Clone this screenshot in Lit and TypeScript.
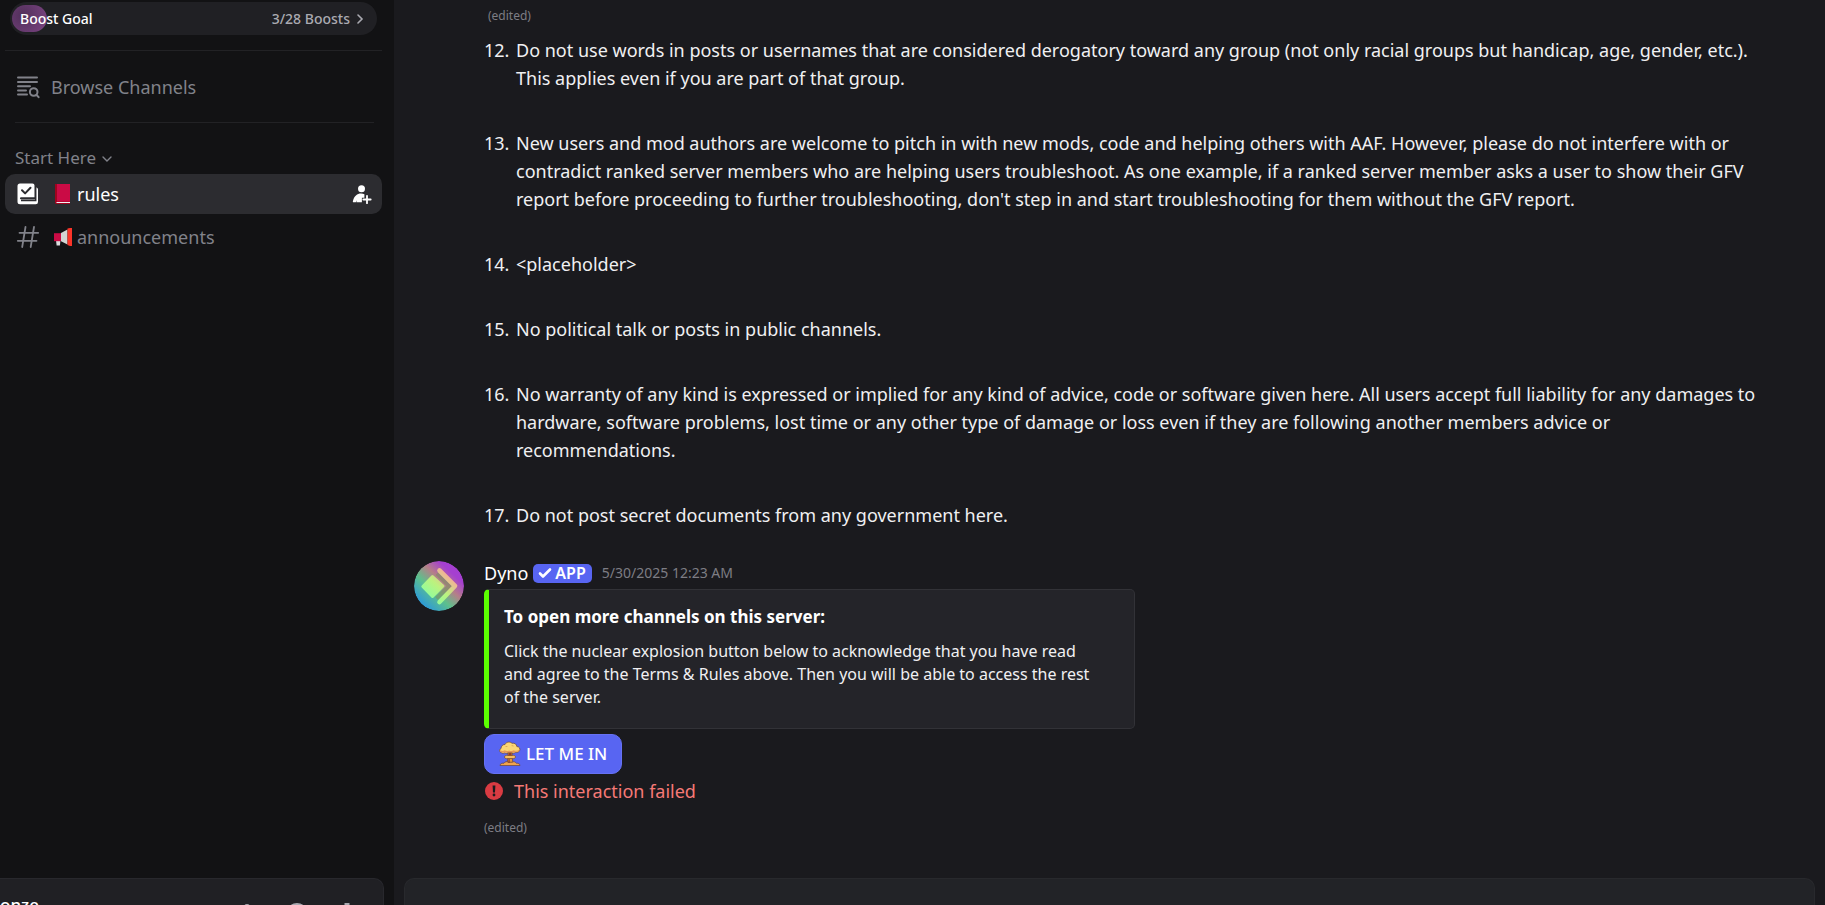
import { LitElement, html, css, svg } from "lit";
import { customElement, property } from "lit/decorators.js";

interface Rule {
  n: number;
  text: string;
}

const RULES: Rule[] = [
  { n: 12, text: "Do not use words in posts or usernames that are considered derogatory toward any group (not only racial groups but handicap, age, gender, etc.). This applies even if you are part of that group." },
  { n: 13, text: "New users and mod authors are welcome to pitch in with new mods, code and helping others with AAF. However, please do not interfere with or contradict ranked server members who are helping users troubleshoot. As one example, if a ranked server member asks a user to show their GFV report before proceeding to further troubleshooting, don't step in and start troubleshooting for them without the GFV report." },
  { n: 14, text: "<placeholder>" },
  { n: 15, text: "No political talk or posts in public channels." },
  { n: 16, text: "No warranty of any kind is expressed or implied for any kind of advice, code or software given here. All users accept full liability for any damages to hardware, software problems, lost time or any other type of damage or loss even if they are following another members advice or recommendations." },
  { n: 17, text: "Do not post secret documents from any government here." },
];

const browseIcon = svg`<svg width="24" height="24" viewBox="0 0 24 24" fill="none" stroke="currentColor" stroke-width="2" stroke-linecap="round"><path d="M2 2.5h19M2 7h19M2 11.2h12M2 15.4h8M2 19.6h9"/><circle cx="17.7" cy="17" r="3.8"/><path d="M20.6 20l2 2.2"/></svg>`;

const rulesIcon = svg`<svg width="24" height="24" viewBox="0 0 24 24" fill="none"><path fill="currentColor" fill-rule="evenodd" d="M4 1.5h12.500a2 2 0 0 1 2 2v11.800H5.200c-1.700 0-1.700 2.200 0 2.200h14.600V5.200c1 .2 2.200.9 2.200 2V20a2.300 2.300 0 0 1-2.300 2.300H4A2.500 2.500 0 0 1 1.500 19.800V4A2.500 2.500 0 0 1 4 1.500z"/><path d="M19.700 4v14.400H5" stroke="#2c2c30" stroke-width="1.500"/><path d="M6 8.300l3.100 3.100 5.400-5.600" stroke="#2c2c30" stroke-width="2" stroke-linecap="round" stroke-linejoin="round"/></svg>`;

const hashIcon = svg`<svg width="24" height="24" viewBox="0 0 24 24" fill="none" stroke="currentColor" stroke-width="1.800" stroke-linecap="round"><path d="M9.500 2L6.200 22M18 2l-3.300 20M3.500 7.800h18.700M1.800 15.800h18.700"/></svg>`;

const bookEmoji = svg`<svg width="16" height="20" viewBox="0 0 16 20"><path fill="#a0041e" d="M0 0h15v20H1.500A1.500 1.500 0 0 1 0 18.500z"/><path fill="#ca0b45" d="M2 0h13v17.500H2z"/><path fill="#f1f1f3" d="M1.500 18h13.500v1H1.500z"/></svg>`;

const megaphoneEmoji = svg`<svg width="20" height="20" viewBox="0 0 20 20"><path fill="#d9dcdd" d="M3 13h4.500l-.6 5.500H3.600z"/><path fill="#ca0b45" d="M1 6.200h7v8H1z"/><path fill="#d3d5d4" d="M8 6l6.500-3.500v15L8 14.300z"/><path fill="#fb3429" d="M14.500 1.500L17 1h2v18h-2l-2.500-1z"/></svg>`;

const addPersonIcon = svg`<svg width="20" height="20" viewBox="0 0 20 20" fill="currentColor"><circle cx="9.500" cy="4.800" r="3.500"/><path d="M1.500 18.300c-.6 0-.8-.4-.6-1C2 12.200 5.300 9.600 9 9.600c1.300 0 2.500.2 3.400.7v3.400H9.900v4.600H4.400l.6-2.100-1.200 2.100z"/><path d="M15 11.800v7.400M11.300 15.500h7.400" stroke="currentColor" stroke-width="1.800" stroke-linecap="round"/></svg>`;

const dynoLogo = svg`<svg class="avatar" width="50" height="50" viewBox="0 0 50 50" role="img" aria-label="Dyno"><defs><linearGradient id="bg" x1="0.100" y1="0.900" x2="0.850" y2="0.100"><stop offset="0" stop-color="#2493e6"/><stop offset=".38" stop-color="#5dc08c"/><stop offset=".62" stop-color="#b57f88"/><stop offset=".85" stop-color="#a53fd0"/><stop offset="1" stop-color="#a53fd0"/></linearGradient><linearGradient id="fg" gradientUnits="userSpaceOnUse" x1="12" y1="38" x2="36" y2="12"><stop offset="0" stop-color="#86ffa4"/><stop offset=".5" stop-color="#bcf27e"/><stop offset="1" stop-color="#ffa39c"/></linearGradient></defs><circle cx="25" cy="25" r="25" fill="url(#bg)"/><path d="M18.500 15.500l10.500 9.500-10.500 10.500L8.800 25.500z" fill="url(#fg)" stroke="url(#fg)" stroke-width="3" stroke-linejoin="round"/><path d="M23 12.500L35.500 25 22.500 37.500" fill="none" stroke="#7f8f62" stroke-opacity=".6" stroke-width="4"/><path d="M25.500 9.500L41 25 25.500 41" fill="none" stroke="url(#fg)" stroke-width="4.600" stroke-linecap="round" stroke-linejoin="round"/></svg>`;

const nukeEmoji = svg`<svg width="22" height="26" viewBox="0 0 22 26"><g stroke="#6b4436" stroke-width=".7" stroke-linejoin="round"><path fill="#e89a3c" d="M8.500 11h5l-.6 4 1 6.500H8.200l1-6.500z"/><path fill="#f2a34b" d="M1 24.500c0-1.600 2-2.500 4-2.300 1-1.700 3-2 4-1h4.300c1.700-1 3-.2 4 1 2-.1 3.700.8 3.700 2.300z"/><path fill="#f7bd60" d="M5.500 16c0-1.500 2-2 3.500-1.500h4c2-.5 3.500.2 3.500 1.500s-2 2-3.500 1.500H9c-1.700.5-3.500 0-3.500-1.500z"/><path fill="#fbd675" d="M2.200 11.500C.2 11-.2 8.700 2 7.600 2 5 4.200 3.300 6 3.500 7.300.8 11 .3 13 2.300c2.500-.6 4.800 1 4.800 3.200 2.700.2 3.700 2.500 2.800 4-.6 1.600-2.800 2.400-4.200 1.800-1.200 1.200-2.700 1-3.400.3-1 .8-3 .8-4 0-1 .8-2.300 1-3.200.2-1.200.8-2.700.6-3.600-.3z"/></g><path fill="#e99757" d="M1 9c1.700 1.500 3.600 1 4.700.2C7.500 10.400 9 10 10 9.400c2 1 3.800.6 4.700-.2 1.700 1 4.300.8 5.600-.6.3 1.700-2 2.700-3.700 2-1 1.300-2.600 1.300-3.700.5-1.200.8-3 .6-3.800 0-1.200.9-2.400 1-3.400.1C3 12 .9 11 1 9z"/><path fill="#8a4030" d="M9.500 11.500h3v3h-3zM9.500 18h1.200v4H9.300z"/><path fill="#c8894a" d="M6 6c1-1.200 2.200-1 3-.3M12 5c1-.9 2.500-.7 3 .3"/></svg>`;

const errorIcon = svg`<svg width="20" height="20" viewBox="0 0 20 20"><circle cx="10" cy="10" r="9" fill="#d93b42"/><path d="M8.600 4.500h2.800L11 11.500H9z" fill="#1a1a1e"/><circle cx="10" cy="14" r="1.400" fill="#1a1a1e"/></svg>`;

@customElement("channel-link")
export class ChannelLink extends LitElement {
  @property() label = "";
  @property({ type: Boolean }) selected = false;
  static styles = css`
    :host { display: block; }
    .row { display: flex; align-items: center; height: 40px; padding: 0 10px 0 11px; border-radius: 10px; color: #81828a; font-size: 18px; line-height: 24px; }
    .row.selected { background: #2c2c30; color: #fff; }
    .line { display: flex; align-items: center; gap: 13px; flex: 1; color: inherit; text-decoration: none; }
    .name { display: flex; align-items: center; gap: 4px; }
    .emoji { display: flex; width: 20px; justify-content: center; }
    svg { display: block; flex: none; }
    .invite { display: flex; padding: 0; border: 0; background: none; color: #fff; }
  `;
  render() {
    return html`<div class="row ${this.selected ? "selected" : ""}">
      <a class="line" href="#${this.label}">
        ${this.selected ? rulesIcon : hashIcon}
        <span class="name"><span class="emoji">${this.selected ? bookEmoji : megaphoneEmoji}</span><span>${this.label}</span></span>
      </a>
      ${this.selected ? html`<button class="invite" aria-label="Create invite">${addPersonIcon}</button>` : ""}
    </div>`;
  }
}

@customElement("server-sidebar")
export class ServerSidebar extends LitElement {
  static styles = css`
    :host { display: flex; flex-direction: column; width: 394px; flex: none; background: #121214; color: #81828a; }
    svg { display: block; flex: none; }
    a { color: inherit; text-decoration: none; }
    .boost { position: relative; display: flex; align-items: center; justify-content: space-between; height: 33px; margin: 2px 17px 0 10px; padding: 0 12px 0 10px; border-radius: 17px; background: #202024; font-size: 14px; font-weight: 500; line-height: 16px; }
    .fill { position: absolute; left: 2px; top: 3px; bottom: 3px; width: 35px; border-radius: 14px; background: radial-gradient(circle at 30% 40%, #51305a, #7d4484); }
    .goal { position: relative; color: #fff; }
    .count { display: flex; align-items: center; gap: 5px; color: #aaaab1; }
    hr { width: auto; height: 1px; margin: 0; border: 0; background: #222225; }
    .wide { margin: 15px 12px 0 5px; }
    .narrow { margin: 0 20px 0 15px; }
    .browse { display: flex; align-items: center; gap: 11px; height: 71px; padding-left: 16px; font-size: 18px; line-height: 24px; }
    .category { display: flex; align-items: center; gap: 5px; height: 24px; margin: 23px 0 4px; padding: 0 0 0 15px; border: 0; background: none; color: #81828a; font: inherit; font-size: 17px; line-height: 24px; }
    .channels { display: flex; flex-direction: column; gap: 3px; padding: 0 12px 0 5px; }
    .spacer { flex: 1; }
    .panel { display: flex; align-items: flex-start; justify-content: space-between; box-sizing: border-box; height: 27px; margin-right: 10px; padding: 14px 24px 0 0; overflow: hidden; border: 1px solid #28282d; border-width: 1px 1px 0 0; border-radius: 0 10px 0 0; background: #202024; color: #fff; font-size: 17px; font-weight: 500; line-height: 24px; }
    .tools { display: flex; gap: 26px; padding-top: 10px; color: #aaaab1; }
    .tools button { display: flex; padding: 0; border: 0; background: none; color: inherit; }
  `;
  render() {
    return html`
      <a class="boost" href="#boosts"><span class="fill"></span><span class="goal">Boost Goal</span>
        <span class="count">3/28 Boosts <svg width="10" height="12" viewBox="0 0 10 12" fill="none" stroke="currentColor" stroke-width="1.600" stroke-linecap="round"><path d="M3 2l4 4-4 4"/></svg></span></a>
      <hr class="wide" />
      <a class="browse" href="#browse">${browseIcon}Browse Channels</a>
      <hr class="narrow" />
      <button class="category">Start Here <svg width="12" height="12" viewBox="0 0 12 12" fill="none" stroke="currentColor" stroke-width="1.400" stroke-linecap="round"><path d="M2 5l4 4 4-4"/></svg></button>
      <nav class="channels">
        <channel-link label="rules" selected></channel-link>
        <channel-link label="announcements"></channel-link>
      </nav>
      <div class="spacer"></div>
      <div class="panel"><span>onze</span>
        <span class="tools">
          <button aria-label="Mute"><svg width="24" height="24" viewBox="0 0 24 24" fill="currentColor"><rect x="9" y="1" width="6" height="14" rx="3"/></svg></button>
          <button aria-label="Deafen"><svg width="24" height="24" viewBox="0 0 24 24" fill="none" stroke="currentColor" stroke-width="2"><circle cx="12" cy="11" r="10"/></svg></button>
          <button aria-label="User settings"><svg width="24" height="24" viewBox="0 0 24 24" fill="currentColor"><path d="M9.500 0h5v5h-5z"/></svg></button>
        </span>
      </div>`;
  }
}

@customElement("app-root")
export class AppRoot extends LitElement {
  static styles = css`
    :host { display: flex; height: 100vh; overflow: hidden; background: #1a1a1e; color: #f0f0f2; font-family: "Noto Sans", sans-serif; font-size: 18px; line-height: 28px; }
    svg { display: block; flex: none; }
    .chat { display: flex; flex-direction: column; flex: 1; min-width: 0; }
    .scroller { flex: 1; min-height: 0; overflow: hidden; padding: 8px 60px 0 20px; }
    .history { padding-left: 70px; }
    .edited { color: #7d7d84; font-size: 12px; line-height: 16px; }
    .history .edited { padding-left: 4px; }
    ol { display: flex; flex-direction: column; gap: 37px; margin: 12px 0 32px; padding: 0; list-style: none; }
    li { display: flex; }
    .number { width: 32px; flex: none; }
    .message { display: flex; gap: 20px; }
    .avatar { border-radius: 50%; }
    .body { display: flex; flex-direction: column; align-items: flex-start; flex: 1; min-width: 0; }
    .header { display: flex; align-items: center; height: 24px; margin-bottom: 4px; line-height: 24px; }
    .author { color: #fff; }
    .badge { display: flex; align-items: center; gap: 3px; height: 19px; margin: 0 10px 0 5px; padding: 0 6px 0 5px; border-radius: 5px; background: #5865f2; color: #fff; font-size: 16px; font-weight: 600; line-height: 19px; }
    time { color: #7d7d84; font-size: 14px; }
    .embed { box-sizing: border-box; width: 100%; max-width: 651px; padding: 13px 30px 19px 15px; border: 1px solid #323237; border-left: 5px solid #5bff00; border-radius: 5px; background: #242429; font-size: 16px; line-height: 23px; }
    .embed h2 { margin: 0 0 9px; color: #fff; font-size: 17px; font-weight: 700; line-height: 28px; }
    .embed p { margin: 0; }
    .enter { display: flex; align-items: center; gap: 5px; height: 40px; margin: 5px 0; padding: 0 14px; border: 1px solid #6671f3; border-radius: 10px; background: #5865f2; color: #fff; font: inherit; font-size: 17px; font-weight: 500; line-height: 24px; }
    .error { display: flex; align-items: center; gap: 10px; height: 24px; margin-bottom: 17px; color: #f57976; }
    .composer { box-sizing: border-box; flex: none; height: 27px; margin: 0 10px; padding: 0 20px; border: 1px solid #28292d; border-bottom: 0; border-radius: 10px 10px 0 0; outline: 0; background: #222327; color: inherit; font: inherit; }
  `;
  render() {
    return html`
      <server-sidebar></server-sidebar>
      <main class="chat">
        <div class="scroller">
          <section class="history">
            <div class="edited">(edited)</div>
            <ol start="12">
              ${RULES.map((r) => html`<li value=${r.n}><span class="number">${r.n}.</span><span>${r.text}</span></li>`)}
            </ol>
          </section>
          <article class="message">
            ${dynoLogo}
            <div class="body">
              <div class="header">
                <span class="author">Dyno</span>
                <span class="badge"><svg width="14" height="12" viewBox="0 0 14 12" fill="none" stroke="currentColor" stroke-width="2.600" stroke-linecap="round" stroke-linejoin="round"><path d="M2 6.500L5 9.500 12 2.500"/></svg>APP</span>
                <time datetime="2025-05-30T00:23">5/30/2025 12:23 AM</time>
              </div>
              <div class="embed">
                <h2>To open more channels on this server:</h2>
                <p>Click the nuclear explosion button below to acknowledge that you have read and agree to the Terms &amp; Rules above. Then you will be able to access the rest of the server.</p>
              </div>
              <button class="enter">${nukeEmoji}LET ME IN</button>
              <div class="error" role="alert">${errorIcon}<span>This interaction failed</span></div>
              <div class="edited">(edited)</div>
            </div>
          </article>
        </div>
        <input class="composer" type="text" aria-label="Message rules" />
      </main>`;
  }
}
